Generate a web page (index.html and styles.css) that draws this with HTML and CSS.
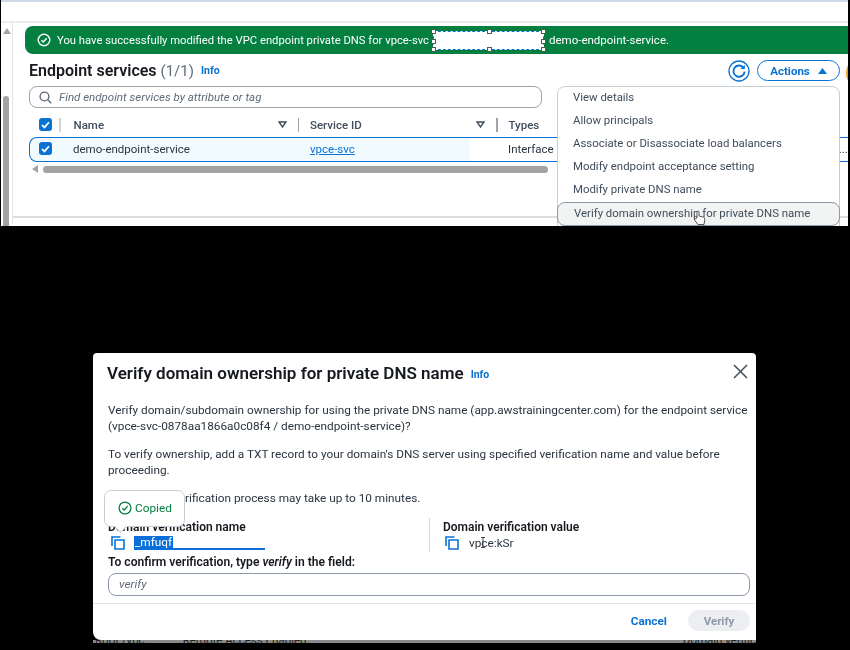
FILE: index.html
```html
<!DOCTYPE html>
<html lang="en">
<head>
<meta charset="utf-8">
<title>Verify domain ownership</title>
<link rel="stylesheet" href="styles.css">
</head>
<body>
<section class="console">
  <div class="console-top"></div>
  <div class="console-body">
    <aside class="vscroll">
      <svg class="vscroll-arrow" width="8" height="6" viewBox="0 0 8 6"><path d="M4 0 8 6H0z" fill="#a3a3a3"/></svg>
      <div class="vscroll-thumb"></div>
    </aside>
    <main class="content">
      <div class="banner">
        <svg class="banner-icon" width="14" height="14" viewBox="0 0 14 14" fill="none" stroke="#fff" stroke-width="1.4"><circle cx="7" cy="7" r="5.8"/><path d="M4.4 7.2 6.3 9l3.400-3.800"/></svg>
        <span class="banner-text">You have successfully modified the VPC endpoint private DNS for vpce-svc</span>
        <span class="redact">
          <i class="h tl"></i><i class="h tc"></i><i class="h tr"></i><i class="h ml"></i><i class="h mr"></i><i class="h bl"></i><i class="h bc"></i><i class="h br"></i>
        </span>
        <span class="banner-text banner-end">demo-endpoint-service.</span>
      </div>
      <div class="panel">
        <header class="panel-head">
          <h2 class="panel-title">Endpoint services <span class="count">(1/1)</span></h2>
          <a class="info info-panel">Info</a>
          <svg class="refresh" width="22" height="22" viewBox="0 0 22 22" fill="none" stroke="#0972d3"><circle cx="11" cy="11" r="10" stroke-width="1.3"/><path d="M15.800 8.200A5.600 5.600 0 1 0 16.600 11.600" stroke-width="1.900"/><path d="M16.800 4.800v4.300h-4.300z" fill="#0972d3" stroke="none"/></svg>
          <button class="actions">Actions <svg width="9" height="6" viewBox="0 0 9 6"><path d="M4.500 0 9 6H0z" fill="#0972d3"/></svg></button>
        </header>
        <div class="search">
          <svg width="13" height="13" viewBox="0 0 13 13" fill="none" stroke="#5f6b7a" stroke-width="1.4"><circle cx="5.500" cy="5.500" r="4.400"/><path d="m8.800 8.800 3.400 3.400"/></svg>
          <span>Find endpoint services by attribute or tag</span>
        </div>
        <div class="row thead">
          <span class="cell-check"><i class="check"><svg width="9" height="8" viewBox="0 0 9 8" fill="none" stroke="#fff" stroke-width="1.7"><path d="m1 4 2.400 2.400L8 1.200"/></svg></i></span>
          <span class="sep sep-a"></span>
          <span class="cell-name">Name</span>
          <svg class="sort" width="9" height="7" viewBox="0 0 9 7" fill="none" stroke="#414d5c" stroke-width="1.4"><path d="M1 1h7L4.500 6z"/></svg>
          <span class="sep"></span>
          <span class="cell-id">Service ID</span>
          <svg class="sort" width="9" height="7" viewBox="0 0 9 7" fill="none" stroke="#414d5c" stroke-width="1.4"><path d="M1 1h7L4.500 6z"/></svg>
          <span class="sep"></span>
          <span class="cell-type">Types</span>
        </div>
        <div class="row trow">
          <span class="cell-check"><i class="check"><svg width="9" height="8" viewBox="0 0 9 8" fill="none" stroke="#fff" stroke-width="1.7"><path d="m1 4 2.400 2.400L8 1.200"/></svg></i></span>
          <span class="cell-name">demo-endpoint-service</span>
          <a class="cell-id link">vpce-svc</a>
          <span class="cell-type">Interface</span>
          <span class="more">...</span>
        </div>
        <div class="hscroll">
          <svg width="6" height="8" viewBox="0 0 6 8"><path d="M0 4 6 0v8z" fill="#a3a3a3"/></svg>
          <div class="hscroll-thumb"></div>
        </div>
      </div>
    </main>
  </div>
  <span class="avatar"></span>
  <ul class="menu">
    <li>View details</li>
    <li>Allow principals</li>
    <li>Associate or Disassociate load balancers</li>
    <li>Modify endpoint acceptance setting</li>
    <li>Modify private DNS name</li>
    <li class="active">Verify domain ownership for private DNS name</li>
  </ul>
  <svg class="hand" width="13" height="16" viewBox="0 0 13 16" fill="#fff" stroke="#444" stroke-width=".9"><path d="M4 8V2.200a1 1 0 0 1 2 0V6l4.500 1.100Q12 7.600 11.800 9.500L11 14.500H5L1.500 10Q1 8.500 2.500 8.700z"/></svg>
</section>

<section class="dialog">
  <header class="dialog-head">
    <h2 class="dialog-title">Verify domain ownership for private DNS name</h2>
    <a class="info">Info</a>
    <svg class="close" width="15" height="15" viewBox="0 0 15 15" fill="none" stroke="#414d5c" stroke-width="1.500"><path d="m1 1 13 13M14 1 1 14"/></svg>
  </header>
  <div class="dialog-body">
    <p>Verify domain/subdomain ownership for using the private DNS name (app.awstrainingcenter.com) for the endpoint service (vpce-svc-0878aa1866a0c08f4 / demo-endpoint-service)?</p>
    <p>To verify ownership, add a TXT record to your domain's DNS server using specified verification name and value before proceeding.</p>
    <p>The domain verification process may take up to 10 minutes.</p>
    <div class="fields">
      <div class="field">
        <strong>Domain verification name</strong>
        <div class="value">
          <svg class="copy" width="14" height="14" viewBox="0 0 14 14" fill="none" stroke="#0972d3" stroke-width="1.600"><path d="M9.500 1H1v9"/><path d="M4 4h9v9H4z"/></svg>
          <span class="selected"><span class="sel-text">_mfuqf</span><i class="sel-rest"></i></span>
        </div>
      </div>
      <div class="field field-b">
        <strong>Domain verification value</strong>
        <div class="value">
          <svg class="copy" width="14" height="14" viewBox="0 0 14 14" fill="none" stroke="#0972d3" stroke-width="1.600"><path d="M9.500 1H1v9"/><path d="M4 4h9v9H4z"/></svg>
          <span>vpce:kSr</span>
        </div>
      </div>
    </div>
    <label class="confirm">To confirm verification, type <em>verify</em> in the field:</label>
    <div class="input">verify</div>
  </div>
  <footer class="dialog-foot">
    <a class="cancel">Cancel</a>
    <button class="verify">Verify</button>
  </footer>
  <svg class="ibeam" width="6" height="11" viewBox="0 0 6 11" fill="none" stroke="#333" stroke-width=".9"><path d="M1 .5h4M3 .5v10M1 10.500h4"/></svg>
  <div class="copied">
    <svg width="14" height="14" viewBox="0 0 14 14" fill="none" stroke="#037f3f" stroke-width="1.300"><circle cx="7" cy="7" r="5.900"/><path d="M4.300 7.200 6.200 9l3.500-3.900"/></svg>
    <span>Copied</span>
    <i class="copied-tip"></i>
  </div>
</section>
<div class="behind"><span>Root /vpc</span><span>Remote Access Enabled</span><span class="behind-end">Domain verific</span></div>
</body>
</html>
```
FILE: styles.css
```css
* { box-sizing: border-box; }
html, body { margin: 0; padding: 0; }
body {
  width: 850px;
  height: 650px;
  overflow: hidden;
  background: #000;
  font-family: Roboto, "Open Sans", sans-serif;
  font-size: 11.5px;
  color: #2a3440;
}
svg { display: block; flex: none; }
i { font-style: normal; }
a { color: #0972d3; }

/* top console capture */
.console {
  position: relative;
  width: 847px;
  height: 226px;
  margin-left: 1px;
  background: #fff;
  border-top: 2px solid #cfd9ea;
  overflow: hidden;
  filter: blur(.3px);
}
.console-top { height: 21px; border-bottom: 2px solid #ececec; }
.console-body { display: flex; height: 201px; }
.vscroll {
  width: 12px;
  height: 201px;
  padding: 5px 2px 0;
  border-right: 1px solid #e4e4e4;
}
.vscroll-arrow { margin-bottom: 62px; }
.vscroll-thumb { width: 6px; height: 140px; border-radius: 3px; background: #a3a3a3; }
.content { width: 835px; padding: 3px 0 0 12px; height: 195px; border-bottom: 2px solid #dcdcdc; }

.banner {
  display: flex;
  align-items: center;
  height: 28px;
  padding-left: 12px;
  background: #037f3f;
  border-radius: 8px 0 0 8px;
  color: #fff;
  font-size: 11.250px;
}
.banner-icon { margin-right: 6px; }
.banner-text { white-space: nowrap; }
.banner-end { margin-left: 5px; font-size: 11.500px; }
.redact {
  position: relative;
  width: 111px;
  height: 19px;
  margin-left: 4px;
  background: #fff;
  border: 1px dashed #0972d3;
}
.h { position: absolute; width: 5px; height: 5px; background: #fff; border: 1px solid #555; }
.tl { left: -3px; top: -3px; }
.tc { left: 53px; top: -3px; }
.tr { right: -3px; top: -3px; }
.ml { left: -3px; top: 7px; }
.mr { right: -3px; top: 7px; }
.bl { left: -3px; bottom: -3px; }
.bc { left: 53px; bottom: -3px; }
.br { right: -3px; bottom: -3px; }

.panel { padding: 0 0 0 4px; }
.panel-head { display: flex; align-items: center; height: 31px; margin-top: 1px; padding-right: 8px; }
.panel-title { margin: 0; font-size: 16px; font-weight: 600; color: #16191f; white-space: nowrap; }
.count { font-weight: 400; font-size: 15px; color: #5f6b7a; }
.info { font-size: 10.500px; font-weight: 700; }
.info-panel { margin-left: 7px; flex: 1; }
.refresh { margin-right: 7px; }
.actions {
  display: flex;
  align-items: center;
  justify-content: center;
  gap: 8px;
  width: 83px;
  height: 21px;
  padding: 0;
  background: #fff;
  border: 1.500px solid #0972d3;
  border-radius: 11px;
  color: #0972d3;
  font: 700 11.5px Roboto, sans-serif;
}
.search {
  display: flex;
  align-items: center;
  gap: 7px;
  width: 513px;
  height: 22px;
  padding-left: 9px;
  border: 1.500px solid #9ba3ad;
  border-radius: 8px;
  font-style: italic;
  color: #5f6b7a;
}
.row { display: flex; align-items: center; white-space: nowrap; }
.thead { height: 25px; margin-top: 4px; padding-left: 1px; font-weight: 500; color: #414d5c; }
.trow {
  width: 830px;
  height: 25px;
  padding-bottom: 2px;
  border: 1.500px solid #0972d3;
  border-right: 0;
  border-radius: 8px 0 0 8px;
  background: linear-gradient(90deg, #f1faff 440px, #fff 440px);
}
.cell-check { width: 43px; padding-left: 9px; }
.check {
  display: flex;
  align-items: center;
  justify-content: center;
  width: 13px;
  height: 13px;
  border-radius: 3px;
  background: #0972d3;
}
.thead .cell-check { width: 29px; }
.sep { width: 1.500px; height: 14px; margin: 0 11px; background: #9ba3ad; }
.sep-a { margin: 0 13px 0 0; background: #d0d4d9; }
.thead .cell-name { width: 204px; }
.trow .cell-name { width: 237px; }
.thead .cell-id { width: 166px; }
.trow .cell-id { width: 198px; text-decoration: underline; }
.link { color: #0972d3; }
.more { margin-left: 285px; }
.hscroll { display: flex; align-items: center; gap: 5px; height: 8px; margin: 3px 0 0 3px; }
.hscroll-thumb { width: 505px; height: 7px; border-radius: 4px; background: #a3a3a3; }

.avatar {
  position: absolute;
  right: -9px;
  top: 61px;
  width: 11px;
  height: 20px;
  border-radius: 50%;
  background: #f59b23;
}
.menu {
  position: absolute;
  left: 556px;
  top: 84px;
  width: 283px;
  height: 150px;
  margin: 0;
  padding: 0;
  list-style: none;
  background: #fff;
  border: 1.500px solid #c9ced4;
  border-radius: 8px;
  font-size: 11.400px;
}
.menu li { height: 23px; padding-left: 15px; line-height: 21px; white-space: nowrap; color: #414d5c; }
.menu li.active {
  margin: 0 -1px;
  padding-left: 16px;
  background: #f2f3f3;
  border: 1.500px solid #8d99a8;
  border-radius: 8px;
  height: 24px;
  line-height: 20px;
}
.hand { position: absolute; left: 692px; top: 208px; }

/* dialog */
.dialog {
  position: relative;
  width: 663px;
  height: 287px;
  margin: 127px 0 0 93px;
  background: #fff;
  border-radius: 4px 4px 0 8px;
  font-size: 11.800px;
  filter: blur(.3px);
}
.dialog-head { display: flex; align-items: center; height: 40px; padding: 0 8px 0 14px; }
.dialog-title { margin: 0; font-size: 17px; font-weight: 600; color: #16191f; white-space: nowrap; }
.dialog-head .info { margin: 3px 0 0 7px; flex: 1; }
.close { margin-top: -4px; }
.dialog-body { padding: 9px 6px 0 15px; height: 210px; }
.dialog-body p { margin: 0 0 12px; line-height: 16px; }
.fields { display: flex; height: 34px; }
.field { width: 321px; line-height: 16px; padding-top: 1px; }
.field strong { font-size: 12px; font-weight: 600; color: #16191f; }
.field-b { flex: 1; padding-left: 13px; border-left: 1px solid #d5dbdb; }
.value { display: flex; align-items: center; gap: 9px; height: 17px; margin-top: -1px; padding-left: 3px; }
.field-b .value { gap: 10px; padding-left: 2px; }
.selected { display: flex; width: 131px; height: 14px; line-height: 13px; border-bottom: 2px solid #0a6fd8; }
.sel-text { width: 39px; height: 14px; padding-left: 1px; color: #fff; background: #0a6fd8; }
.sel-rest { flex: 1; }
.confirm { display: block; margin-top: 2px; font-size: 12.100px; font-weight: 600; line-height: 17px; color: #16191f; }
.input {
  height: 23px;
  margin-top: 2px;
  padding-left: 10px;
  border: 1.500px solid #8d99a8;
  border-radius: 8px;
  font-style: italic;
  line-height: 20px;
  color: #5f6b7a;
}
.dialog-foot {
  display: flex;
  align-items: center;
  justify-content: flex-end;
  gap: 21px;
  height: 36px;
  padding: 0 6px 2px 0;
  border-top: 1.500px solid #e3e5e8;
}
.cancel { font-weight: 700; }
.verify {
  width: 62px;
  height: 21px;
  padding: 0;
  border: 0;
  border-radius: 11px;
  background: #eceef1;
  color: #8d99a8;
  font: 700 11.5px Roboto, sans-serif;
}
.ibeam { position: absolute; left: 387px; top: 184px; }
.copied {
  position: absolute;
  left: 11px;
  top: 137px;
  display: flex;
  align-items: center;
  gap: 3px;
  width: 81px;
  height: 37px;
  padding: 0 0 2px 13px;
  background: #fff;
  border: 1px solid #c9ced4;
  border-radius: 7px;
  color: #037f3f;
}
.copied-tip {
  position: absolute;
  left: 11px;
  bottom: -5px;
  width: 9px;
  height: 9px;
  background: #fff;
  border: solid #c9ced4;
  border-width: 0 1px 1px 0;
  transform: rotate(45deg);
}
.behind {
  display: flex;
  gap: 38px;
  width: 663px;
  height: 3px;
  margin-left: 93px;
  padding-left: 2px;
  overflow: hidden;
  background: #8a8a8a;
  color: #222;
  line-height: 1px;
  font-size: 11.500px;
}
.behind-end { margin-left: auto; }
```
